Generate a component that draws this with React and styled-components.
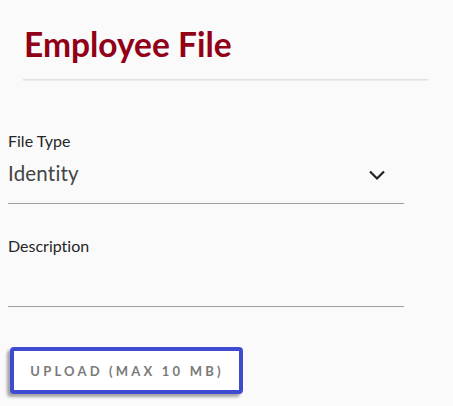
import React from 'react';
import styled, { createGlobalStyle } from 'styled-components';

const GlobalStyle = createGlobalStyle`
  html, body {
    margin: 0;
    padding: 0;
    background: #fafafa;
    font-family: 'Lato', 'Liberation Sans', sans-serif;
  }

  * {
    font-variant-ligatures: none;
  }
`;

const Page = styled.div`
  width: 453px;
  height: 406px;
  overflow: hidden;
  background: #fafafa;
`;

const Header = styled.header`
  padding: 22px 25px 0 23px;
`;

const Title = styled.h1`
  margin: 0 0 0 1px;
  font-size: 33.5px;
  font-weight: 700;
  line-height: 44px;
  color: #920018;
`;

const Divider = styled.hr`
  margin: 13px 0 0;
  height: 0;
  border: 1px solid #e4e4e4;
  border-top-color: #e0e0e0;
  border-bottom-color: #ececec;
`;

const Form = styled.form`
  width: 396px;
  margin: 50px 0 0 8px;
  display: flex;
  flex-direction: column;
`;

const Field = styled.div`
  display: flex;
  flex-direction: column;
  border-bottom: 1px solid #9e9e9e;
  margin-bottom: ${p => p.gap || 0}px;
`;

const Label = styled.label`
  font-size: 16px;
  font-weight: 400;
  line-height: 20px;
  color: #262626;
`;

const SelectRow = styled.div`
  display: flex;
  align-items: center;
  justify-content: space-between;
  height: 44px;
  padding: 0 18px 8px 0;
`;

const Value = styled.span`
  font-size: 20.5px;
  font-weight: 400;
  color: #444;
  letter-spacing: 0.2px;
`;

const Chevron = styled.svg`
  width: 18px;
  height: 12px;
  margin-top: 3px;
`;

const TextArea = styled.div`
  height: 50px;
`;

const UploadButton = styled.button`
  align-self: flex-start;
  margin: 0 0 0 2px;
  width: 233px;
  height: 47px;
  background: #fff;
  border: 4px solid #3e4bd0;
  border-radius: 4px;
  box-shadow: -3px 3px 3px rgba(0, 0, 0, 0.35);
  font-family: 'Lato', 'Liberation Sans', sans-serif;
  font-size: 13px;
  font-weight: 700;
  letter-spacing: 3.2px;
  color: #7a7a7a;
  padding: 0 0 0 1px;
`;

export default function App() {
  return (
    <Page>
      <GlobalStyle />
      <Header>
        <Title>Employee File</Title>
        <Divider />
      </Header>
      <Form>
        <Field gap={32}>
          <Label>File Type</Label>
          <SelectRow>
            <Value>Identity</Value>
            <Chevron viewBox="0 0 18 12">
              <path d="M2 2.5 L9 9.5 L16 2.5" fill="none" stroke="#212121" strokeWidth="2.2" />
            </Chevron>
          </SelectRow>
        </Field>
        <Field gap={40}>
          <Label>Description</Label>
          <TextArea />
        </Field>
        <UploadButton type="button">UPLOAD (MAX 10 MB)</UploadButton>
      </Form>
    </Page>
  );
}
